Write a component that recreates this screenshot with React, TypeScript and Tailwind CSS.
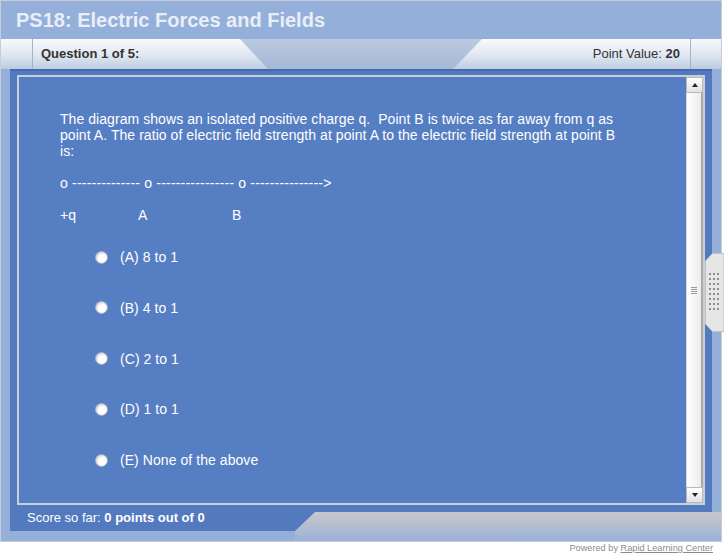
import React from "react";

const options = [
  "(A) 8 to 1",
  "(B) 4 to 1",
  "(C) 2 to 1",
  "(D) 1 to 1",
  "(E) None of the above",
];

function Radio() {
  return (
    <div className="w-[13px] h-[13px] rounded-full bg-white border border-[#a3abbb] shadow-[inset_1px_1px_2px_rgba(0,0,0,0.18)] shrink-0" />
  );
}

export default function App() {
  return (
    <div className="relative w-[724px] h-[558px] bg-white overflow-hidden font-['Liberation_Sans',Arial,sans-serif]">
      <div className="w-[722px] h-[542px] border border-[#c9ccd3] bg-[#94b0da] flex flex-col">
        {/* Title */}
        <div className="h-[38px] flex items-center pl-[15px] text-[20px] font-bold text-[#e9eef8] leading-none">
          PS18: Electric Forces and Fields
        </div>

        {/* Tab bar */}
        <div className="h-[30px] flex bg-gradient-to-b from-[#bccadf] to-[#a4b8d6]">
          <div className="w-[32px] border-r border-[#a6b2c6] bg-gradient-to-b from-[#f7f9fc] via-[#e1e7f1] to-[#bccbe0]" />
          <div className="w-[235px] flex items-center pl-[8px] text-[13px] font-bold text-[#333333] bg-gradient-to-b from-[#f9fafd] via-[#e3e9f2] to-[#bfcde1] [clip-path:polygon(0_0,207px_0,100%_100%,0_100%)]">
            Question 1 of 5:
          </div>
          <div className="flex-1" />
          <div className="w-[237px] flex items-center justify-end pr-[10px] text-[13px] text-[#333333] bg-gradient-to-b from-[#f9fafd] via-[#e3e9f2] to-[#bfcde1] [clip-path:polygon(29px_0,100%_0,100%_100%,0_100%)]">
            Point Value:&nbsp;<span className="font-bold">20</span>
          </div>
          <div className="w-[31px] border-l border-[#a6b2c6] bg-gradient-to-b from-[#f7f9fc] via-[#e1e7f1] to-[#bccbe0]" />
        </div>

        {/* Body */}
        <div className="flex-1 flex flex-col px-[9px] pb-[10px]">
          <div className="flex-1 flex flex-col bg-[#5379be] border-t-2 border-[#4769ad] pt-[4px] px-[7px]">
            <div className="h-[430px] border-2 border-[#c7cfdc] bg-[#567ec3] flex">
              {/* Main */}
              <div className="flex-1 pt-[34px] pl-[41px] text-[14px] leading-[16px] text-white tracking-[0.06px]">
                <div className="whitespace-nowrap">
                  The diagram shows an isolated positive charge q.{"\u00a0"} Point B is twice as far away from q as
                </div>
                <div className="whitespace-nowrap">
                  point A. The ratio of electric field strength at point A to the electric field strength at point B
                </div>
                <div>is:</div>
                <div className="h-[16px]" />
                <div className="whitespace-nowrap tracking-[0.2px]">
                  o -------------- o ---------------- o ---------------&gt;
                </div>
                <div className="h-[16px]" />
                <div className="flex whitespace-nowrap">
                  <span className="w-[78px]">+q</span>
                  <span className="w-[94px]">A</span>
                  <span>B</span>
                </div>
                <div className="mt-[26px] ml-[35px] flex flex-col gap-[34.75px]">
                  {options.map((o) => (
                    <div key={o} className="h-[16px] flex items-center gap-[12px]">
                      <Radio />
                      <span className="whitespace-nowrap">{o}</span>
                    </div>
                  ))}
                </div>
              </div>

              {/* Scrollbar */}
              <div className="w-[17px] flex flex-col bg-[#f3f3f3]">
                <div className="h-[16px] flex items-center justify-center border border-[#b9b9b9] bg-gradient-to-b from-white to-[#e2e2e2]">
                  <div className="w-0 h-0 border-x-[3px] border-x-transparent border-b-[4px] border-b-[#222]" />
                </div>
                <div className="flex-1 flex items-center justify-center border-l border-[#d6d6d6] border-r-2 border-r-[#ababab] bg-gradient-to-r from-white to-[#ececec]">
                  <div className="flex flex-col gap-[1px]">
                    <div className="w-[6px] h-[1px] bg-[#9a9a9a]" />
                    <div className="w-[6px] h-[1px] bg-[#9a9a9a]" />
                    <div className="w-[6px] h-[1px] bg-[#9a9a9a]" />
                    <div className="w-[6px] h-[1px] bg-[#9a9a9a]" />
                  </div>
                </div>
                <div className="h-[16px] flex items-center justify-center border border-[#b9b9b9] bg-gradient-to-b from-white to-[#e2e2e2]">
                  <div className="w-0 h-0 border-x-[3px] border-x-transparent border-t-[4px] border-t-[#222]" />
                </div>
              </div>
            </div>

            <div className="mt-[5px] pl-[10px] text-[13px] leading-[15px] text-white">
              Score so far: <span className="font-bold">0 points out of 0</span>
            </div>
          </div>
        </div>
      </div>

      {/* Powered by */}
      <div className="h-[16px] flex justify-end pr-[11px] text-[9.2px] leading-[12px] text-[#8c8c8c]">
        Powered by&nbsp;<span className="underline">Rapid Learning Center</span>
      </div>

      {/* Bottom-right tab overlay */}
      <div className="absolute left-[295px] top-[512px] w-[426px] h-[29px] bg-gradient-to-b from-[#c6c8cd] via-[#b3bdd0] to-[#99b2da] [clip-path:polygon(20px_0,100%_0,100%_100%,0_100%,0_19px)]" />

      {/* Right grip handle overlay */}
      <svg className="absolute left-[705px] top-[253px]" width="19" height="79" viewBox="0 0 19 79">
        <polygon points="7.5,0.5 19,0.5 19,78.5 7.5,78.5 0.5,71 0.5,8" fill="#e6e6e6" stroke="#c2c2c2" />
        {[0, 1, 2, 3, 4, 5, 6, 7].map((r) =>
          [0, 1, 2].map((c) => (
            <rect key={`${r}-${c}`} x={4 + c * 4} y={20 + r * 5} width="2" height="2" fill="#8e8e8e" />
          ))
        )}
      </svg>
    </div>
  );
}
